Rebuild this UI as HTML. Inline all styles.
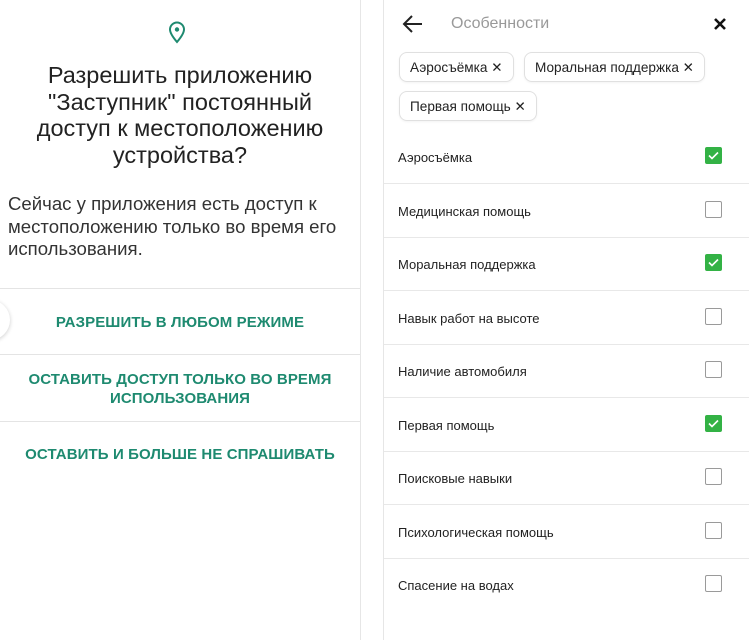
<!DOCTYPE html>
<html><head><meta charset="utf-8"><style>
body{margin:0;width:749px;height:640px;background:#fff;font-family:"Liberation Sans",sans-serif;position:relative;overflow:hidden}
.a{position:absolute}
.lp{left:0;top:0;width:360px;height:640px;border-right:1px solid #e6e6e6}
.t{left:0;width:360px;text-align:center;font-size:23.5px;color:#222;line-height:26.7px;top:62px}
.b{left:8px;width:352px;font-size:18.6px;color:#333;line-height:22.5px;top:193px}
.hr{height:1px;background:#e4e4e4}
.btn{left:0;width:360px;text-align:center;color:#1e8a70;font-size:15px;font-weight:bold;line-height:19px;letter-spacing:0.1px}
.rp{left:383px;top:0;width:366px;height:640px;border-left:1px solid #e6e6e6}
.chip{position:absolute;height:30px;border:1px solid #e0e0e0;border-radius:8px;font-size:13.6px;color:#222;line-height:30px;padding:0 10px;box-sizing:border-box;box-shadow:0 1px 2px rgba(0,0,0,.05)}
.row{position:absolute;left:0;width:366px;height:53px;border-bottom:1px solid #e8e8e8;font-size:13px;color:#222}
.row span{position:absolute;left:14px;top:20px}
.cb{position:absolute;left:321px;top:17px;width:15px;height:15px;border:1.5px solid #9a9a9a;border-radius:2px}
.ck{border:1.5px solid #33b245;background:#33b245}
</style></head><body>
<div class="a lp">
<svg class="a" style="left:167px;top:20px" width="20" height="24" viewBox="0 0 20 24"><path d="M10 22C4 15 3 12 3 9.5A7 7 0 0 1 17 9.5C17 12 16 15 10 22Z" fill="none" stroke="#1e8a70" stroke-width="2"/><circle cx="10" cy="9.5" r="2.2" fill="#1e8a70"/></svg>
<div class="a t">Разрешить приложению<br>"Заступник" постоянный<br>доступ к местоположению<br>устройства?</div>
<div class="a b">Сейчас у приложения есть доступ к местоположению только во время его использования.</div>
<div class="a hr" style="left:0;top:288px;width:360px"></div>
<div class="a" style="left:-30px;top:300px;width:40px;height:40px;border-radius:50%;background:#fff;box-shadow:0 1px 4px rgba(0,0,0,.2)"></div>
<div class="a btn" style="top:313px">РАЗРЕШИТЬ В ЛЮБОМ РЕЖИМЕ</div>
<div class="a hr" style="left:0;top:354px;width:360px"></div>
<div class="a btn" style="top:370px">ОСТАВИТЬ ДОСТУП ТОЛЬКО ВО ВРЕМЯ<br>ИСПОЛЬЗОВАНИЯ</div>
<div class="a hr" style="left:0;top:421px;width:360px"></div>
<div class="a btn" style="top:445px">ОСТАВИТЬ И БОЛЬШЕ НЕ СПРАШИВАТЬ</div>
</div>
<div class="a rp">
<svg class="a" style="left:18px;top:14px" width="22" height="20" viewBox="0 0 22 20"><path d="M20 10H3M10 2L2 10L10 18" fill="none" stroke="#222" stroke-width="2"/></svg>
<div class="a" style="left:67px;top:15px;font-size:16px;color:#999">Особенности</div>
<svg class="a" style="left:329px;top:17px" width="14" height="14" viewBox="0 0 14 14"><path d="M2 2L12 12M12 2L2 12" stroke="#111" stroke-width="2.6"/></svg>
<div class="chip" style="left:15px;top:52px">Аэросъёмка ✕</div>
<div class="chip" style="left:140px;top:52px">Моральная поддержка ✕</div>
<div class="chip" style="left:15px;top:91px">Первая помощь ✕</div>
<div class="row" style="top:130px"><span>Аэросъёмка</span><div class="cb ck"><svg width="15" height="15" viewBox="0 0 15 15" style="display:block"><path d="M3 7.5L6 10.5L12 4.5" fill="none" stroke="#fff" stroke-width="1.6"/></svg></div></div>
<div class="row" style="top:184px"><span>Медицинская помощь</span><div class="cb"></div></div>
<div class="row" style="top:237px"><span>Моральная поддержка</span><div class="cb ck"><svg width="15" height="15" viewBox="0 0 15 15" style="display:block"><path d="M3 7.5L6 10.5L12 4.5" fill="none" stroke="#fff" stroke-width="1.6"/></svg></div></div>
<div class="row" style="top:291px"><span>Навык работ на высоте</span><div class="cb"></div></div>
<div class="row" style="top:344px"><span>Наличие автомобиля</span><div class="cb"></div></div>
<div class="row" style="top:398px"><span>Первая помощь</span><div class="cb ck"><svg width="15" height="15" viewBox="0 0 15 15" style="display:block"><path d="M3 7.5L6 10.5L12 4.5" fill="none" stroke="#fff" stroke-width="1.6"/></svg></div></div>
<div class="row" style="top:451px"><span>Поисковые навыки</span><div class="cb"></div></div>
<div class="row" style="top:505px"><span>Психологическая помощь</span><div class="cb"></div></div>
<div class="row" style="top:558px;border-bottom:none"><span>Спасение на водах</span><div class="cb"></div></div>
</div>
</body></html>
